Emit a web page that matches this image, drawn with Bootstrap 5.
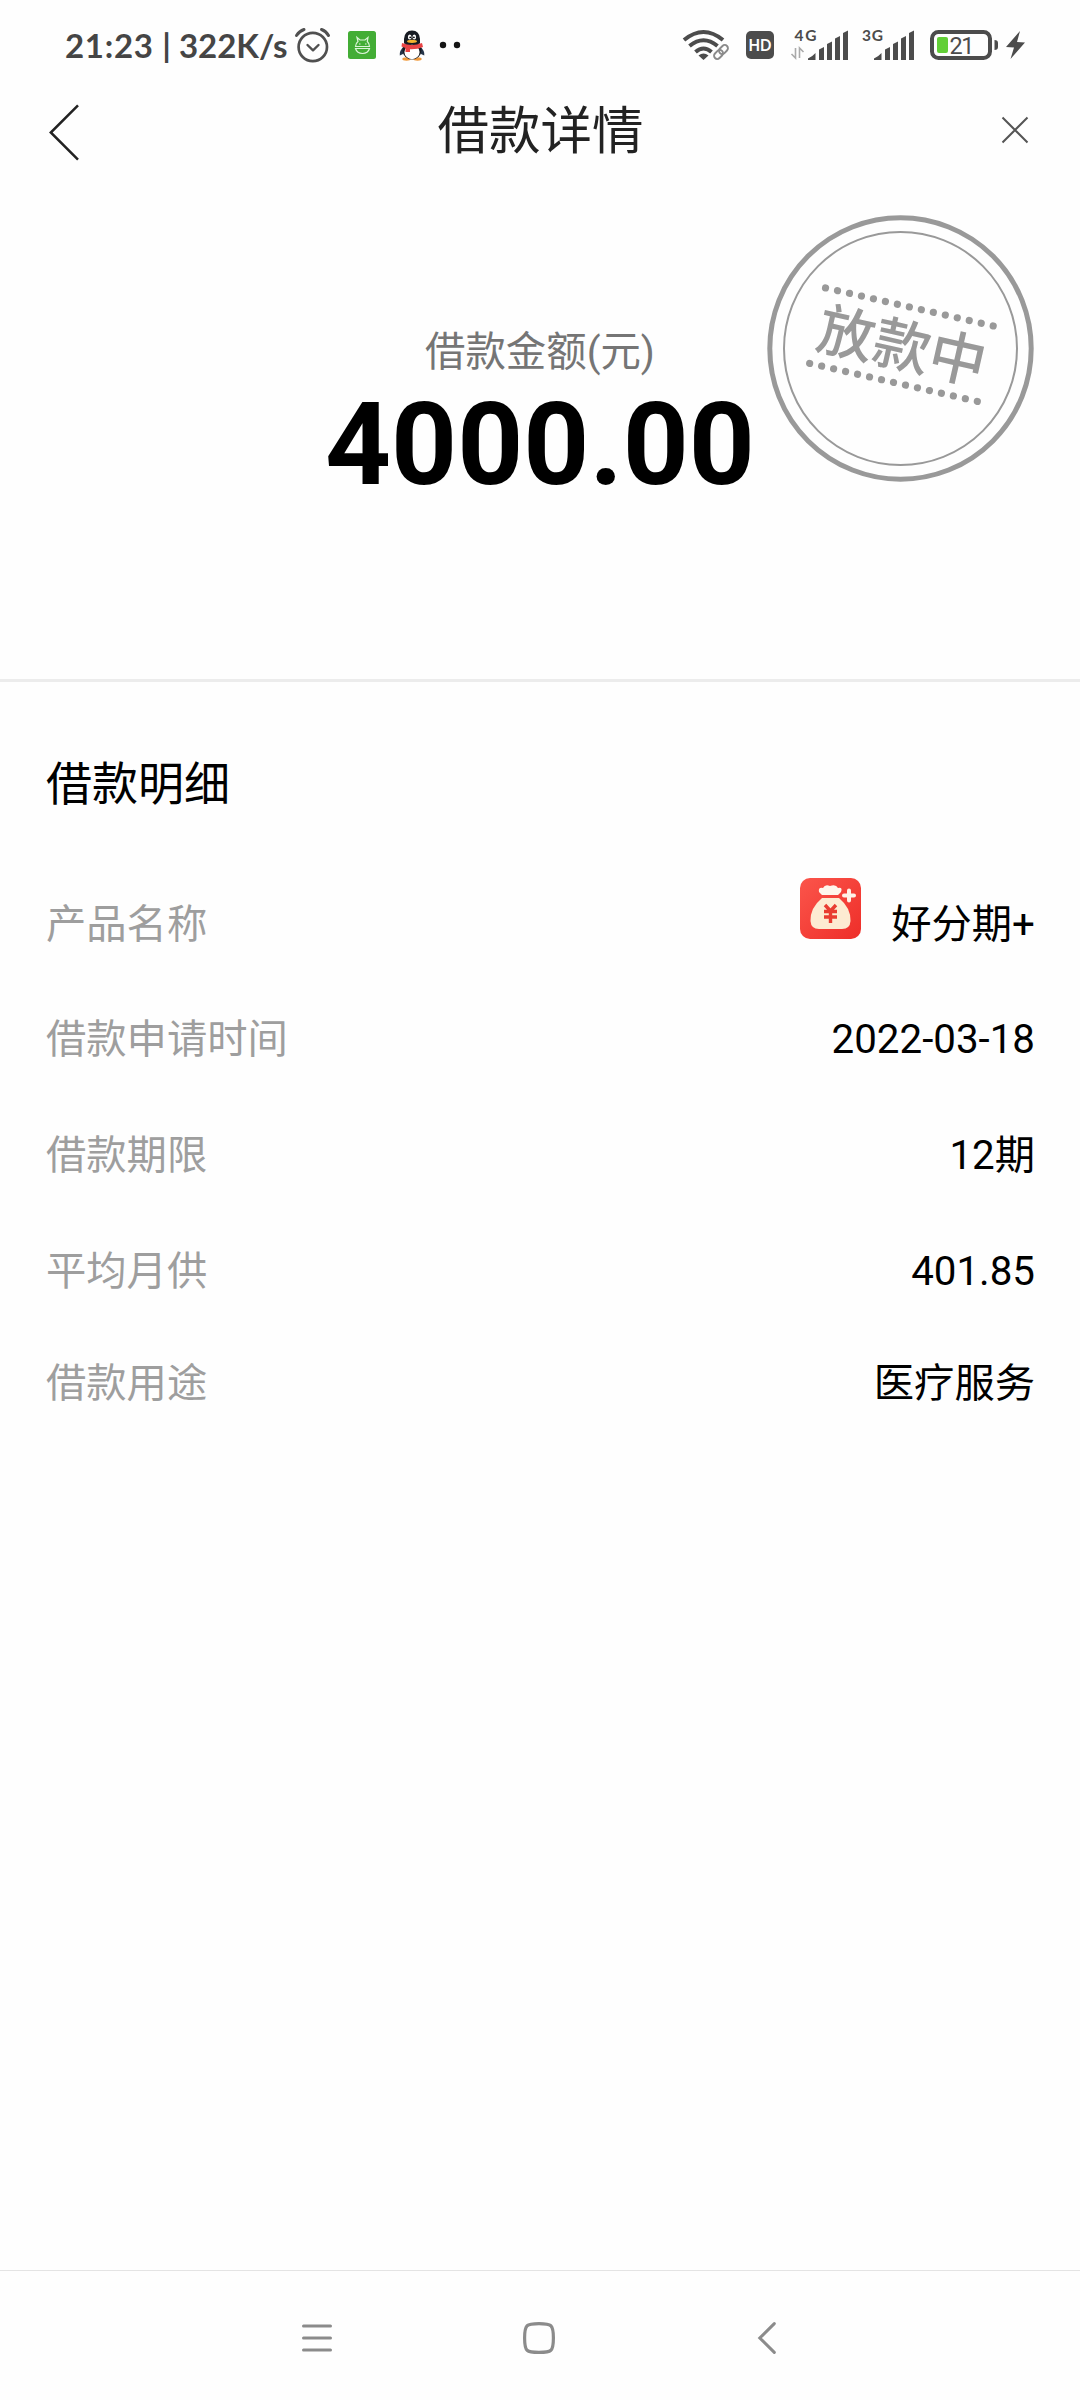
<!DOCTYPE html>
<html lang="zh-CN">
<head>
<meta charset="utf-8">
<meta name="viewport" content="width=device-width, initial-scale=1">
<title>借款详情</title>
<link href="https://cdn.jsdelivr.net/npm/bootstrap@5.3.0/dist/css/bootstrap.min.css" rel="stylesheet">
<style>
  body { font-family: Roboto, "Noto Sans CJK SC", sans-serif; background: #fefefe; color: #000; }
  svg { display: block; flex: none; overflow: visible; }
  .screen { width: 1080px; height: 2400px; }
  .status { height: 90px; padding-left: 65px; color: #454545; }
  .clock { font: 700 33px/40px Lato, sans-serif; width: 230px; white-space: pre; }
  .clock span { letter-spacing: .7px; }
  .ic-robot { margin-left: 18px; }
  .ic-penguin { margin-left: 23px; }
  .ic-dots { margin-left: 14px; }
  .ic-wifi { margin-left: 222px; }
  .ic-hd, .ic-sim1 { margin-left: 17px; }
  .ic-sim2 { margin-left: 14px; }
  .ic-battery { margin-left: 16px; }
  .ic-bolt { margin-left: 8px; }
  .titlebar { height: 80px; padding: 3px 52px 0 49px; color: #222; }
  .titlebar h1 { font-size: 51.5px; line-height: 77px; font-weight: 400; }
  .titlebar .ic-close { margin-bottom: 3px; }
  .hero { height: 512px; padding-top: 155px; border-bottom: 3px solid #ececec; }
  .caption { font-size: 40.4px; line-height: 56px; color: #757575; }
  .amount { font-size: 115.200px; line-height: 128px; font-weight: 700; }
  .stamp { top: 45px; right: 46px; }
  .details { padding: 72px 45px 0 46px; }
  .details h2 { font-size: 46px; line-height: 60px; font-weight: 400; margin: 0 0 53px; }
  .line { height: 115.6px; font-size: 40.3px; line-height: 60px; }
  .line:last-child { margin-top: -3.4px; }
  .line dt { font-weight: 400; color: #9e9e9e; }
  .line dd { margin: 0; }
  .logo { margin: -32px 30px 0 0; }
  .sysnav { height: 130px; border-top: 1px solid #e4e4e4; padding: 51px 304px 0 302px; }
  .sysnav .home { margin-right: 12px; }
</style>
<script src="https://cdn.jsdelivr.net/npm/bootstrap@5.3.0/dist/js/bootstrap.bundle.min.js"></script>
</head>
<body>
<div class="screen d-flex flex-column">
  <header>
    <div class="status d-flex align-items-center">
      <span class="clock"><span>21:23 </span>| 322K/s</span>
      <!-- alarm -->
      <svg width="35" height="35" viewBox="0 0 35 35" fill="none" stroke="#505050" stroke-width="2.7" stroke-linecap="round" stroke-linejoin="round"><circle cx="17.8" cy="19" r="14.2"/><path d="M12.5 17l5.5 5.3 5.5-5.3" stroke-width="2.4"/><path d="M1.500 7.500Q4.500 3 9 1.500M26.500 1.500Q31 3 33.500 7.500" stroke-width="3"/></svg>
      <!-- green robot -->
      <svg class="ic-robot" width="28" height="28" viewBox="0 0 28 28"><rect width="28" height="28" rx="2.500" fill="#43ad35"/><g fill="none" stroke="#dcf4d8" stroke-width="1.200"><path d="M9 6.500l1 4Q7.500 12.500 7.500 15.500H21.500Q21.500 12.500 19.300 10.500l.7-4-3 2.500h-5zM7.500 17.500Q9 22.500 14.500 22.500 20 22.500 21.500 17.500zM11 13h1.500M17 13h1.500"/></g></svg>
      <!-- penguin -->
      <svg class="ic-penguin" width="26" height="31" viewBox="0 0 26 31"><path d="M5 16Q0 21 .8 25.500l3.200-1.500M21 16q5 5 4.300 9.500L22 24" fill="#253449"/><ellipse cx="7.500" cy="29" rx="4.200" ry="1.700" fill="#f09a3c"/><ellipse cx="18.500" cy="29" rx="4.200" ry="1.700" fill="#f09a3c"/><ellipse cx="13" cy="20" rx="9.500" ry="9.500" fill="#171b22"/><ellipse cx="13" cy="22" rx="7.600" ry="7.200" fill="#fff"/><path d="M5 13.500V9Q5.500.5 13 .5T21 9v4.500z" fill="#171b22"/><ellipse cx="10.700" cy="7" rx="1.800" ry="2.500" fill="#fff"/><ellipse cx="15.300" cy="7" rx="1.800" ry="2.500" fill="#fff"/><circle cx="11.200" cy="7.300" r=".9"/><circle cx="14.900" cy="7.300" r=".9"/><ellipse cx="13" cy="11.300" rx="5" ry="1.600" fill="#f5b32f"/><path d="M3 13q10 4 20 0l1 4q-6 2.500-13 2.200V22H6.500v-4L2.500 16.500z" fill="#e84445"/></svg>
      <svg class="ic-dots" width="22" height="8" viewBox="0 0 22 8"><circle cx="4" cy="4" r="3.200" fill="#151515"/><circle cx="18" cy="4" r="3.200" fill="#151515"/></svg>
      <!-- wifi with link -->
      <svg class="ic-wifi" width="46" height="30" viewBox="0 0 46 30" fill="none" stroke="#4c4c4c" stroke-width="4"><path d="M1 10Q20.500-6 40 10M6.500 16Q20.500 4.500 34.500 16M12.500 22Q20.500 15 28.500 22"/><path d="M15.500 25.500Q20.500 21.500 25.500 25.500L20.500 30z" fill="#4c4c4c" stroke="none"/><g stroke="#8a8a8a" stroke-width="1.900" transform="translate(38 22) rotate(-45)"><rect x="-8.500" y="-3.200" width="10" height="6.400" rx="3.200"/><rect x="-1.500" y="-3.200" width="10" height="6.400" rx="3.200"/></g></svg>
      <svg class="ic-hd" width="28" height="28" viewBox="0 0 28 28"><rect width="28" height="28" rx="5" fill="#4c4c4c"/><text x="14" y="20.300" text-anchor="middle" textLength="23" lengthAdjust="spacingAndGlyphs" font-family="Lato" font-weight="700" font-size="17" fill="#fff">HD</text></svg>
      <!-- signal meters -->
      <svg class="ic-sim1" width="57" height="31" viewBox="0 0 57 31" fill="#4c4c4c"><text x="3.500" y="11" textLength="22" font-family="Lato" font-weight="700" font-size="15.500">4G</text><path d="M4.500 18v10L.5 24M8.500 28V18l4 4" fill="none" stroke="#aaa" stroke-width="1.600"/><path d="M17 30V28.500Q22 26 24.500 23V30zM28 19.500l5-2.500V30h-5zM36 14l5-2.500V30h-5zM44 8.500l5-2.500V30h-5zM52 3l5-2.500V30h-5z"/></svg>
      <svg class="ic-sim2" width="52" height="31" viewBox="0 0 52 31" fill="#4c4c4c"><text x="0" y="11" textLength="21" font-family="Lato" font-weight="700" font-size="15.500">3G</text><path d="M12 30V28.500Q17 26 19.500 23V30zM23 19.500l5-2.500V30h-5zM31 14l5-2.500V30h-5zM39 8.500l5-2.500V30h-5zM47 3l5-2.500V30h-5z"/></svg>
      <!-- battery -->
      <svg class="ic-battery" width="68" height="30" viewBox="0 0 68 30"><rect x="2" y="2" width="58" height="26" rx="6.500" fill="none" stroke="#4c4c4c" stroke-width="4"/><rect x="7" y="7" width="11" height="16" rx="2" fill="#62cf37"/><path d="M64.500 10q3.500 0 3.500 3v4q0 3-3.500 3z" fill="#4c4c4c"/><text x="19.500" y="24" textLength="25" font-family="Roboto" font-size="23.500" fill="#4c4c4c">21</text></svg>
      <svg class="ic-bolt" width="19" height="28" viewBox="0 0 19 28"><path d="M14 0L0 16l8 .5L4.500 28 19 11.500l-8-.5z" fill="#4c4c4c"/></svg>
    </div>
    <div class="titlebar d-flex align-items-center justify-content-between">
      <svg width="30" height="56" viewBox="0 0 30 56" fill="none" stroke="#222" stroke-width="2.500"><path d="M29 1.300L1.800 28.500 29 55.700"/></svg>
      <h1 class="m-0">借款详情</h1>
      <svg class="ic-close" width="26" height="26" viewBox="0 0 26 26" stroke="#555" stroke-width="2"><path d="M.5.5l25 25M25.500.5l-25 25"/></svg>
    </div>
  </header>

  <section class="hero position-relative text-center">
    <div class="caption">借款金额(元)</div>
    <div class="amount">4000.00</div>
    <svg class="stamp position-absolute" width="267" height="267" viewBox="-133.500 -133.500 267 267" fill="none" stroke="#999">
      <circle r="130.700" stroke-width="5"/><circle r="116.500" stroke-width="2"/>
      <g transform="rotate(12.770)">
        <g stroke-width="7.200" stroke-linecap="round" stroke-dasharray="0 12.280"><path d="M-86.500-42.500H86"/><path d="M-85.300 34.600H87.200"/></g>
        <text x="1" y="18" text-anchor="middle" font-family="Noto Sans CJK SC" font-weight="500" font-size="57" fill="#999" stroke="none">放款中</text>
      </g>
    </svg>
  </section>

  <main class="details flex-grow-1">
    <h2>借款明细</h2>
    <dl class="m-0">
      <div class="line d-flex justify-content-between align-items-center"><dt>产品名称</dt><dd class="d-flex align-items-center">
        <svg class="logo" width="61" height="61" viewBox="0 0 61 61">
          <defs><linearGradient id="red" x1="0" y1="0" x2="1" y2="1"><stop stop-color="#fb554b"/><stop offset="1" stop-color="#ee2e29"/></linearGradient></defs>
          <rect width="61" height="61" rx="10" fill="url(#red)"/>
          <path d="M19 14Q18 9 23 10q2-4 7-2 6-2 8 2 5-1 3 4l-3 3H22z" fill="#fff6ec"/>
          <path d="M22 20H39Q51 30 50.500 43 50 51 42 51H19Q11 51 10.500 43 10 30 22 20z" fill="#fdebd2"/>
          <path d="M49 12.500v10M44 17.500h10" stroke="#fff1e8" stroke-width="4" stroke-linecap="round"/>
          <path d="M25 27l5.500 6L36 27M24 33.500h13M24 39h13M30.500 33v12" fill="none" stroke="#e93c31" stroke-width="3.400"/>
        </svg><span>好分期+</span></dd></div>
      <div class="line d-flex justify-content-between align-items-center"><dt>借款申请时间</dt><dd>2022-03-18</dd></div>
      <div class="line d-flex justify-content-between align-items-center"><dt>借款期限</dt><dd>12期</dd></div>
      <div class="line d-flex justify-content-between align-items-center"><dt>平均月供</dt><dd>401.85</dd></div>
      <div class="line d-flex justify-content-between align-items-center"><dt>借款用途</dt><dd>医疗服务</dd></div>
    </dl>
  </main>

  <nav class="sysnav d-flex justify-content-between align-items-start">
    <svg width="30" height="32" viewBox="0 0 30 32" stroke="#8b8b8b" stroke-width="3" stroke-linecap="round"><path d="M1.500 4h27M1.500 16h27M1.500 28h27"/></svg>
    <svg class="home" width="32" height="32" viewBox="0 0 32 32" fill="none" stroke="#8b8b8b" stroke-width="3.200"><path d="M16 1.600C28.500 1.600 30.400 2.500 30.400 16S28.500 30.400 16 30.400 1.600 29.500 1.600 16 3.500 1.600 16 1.600z"/></svg>
    <svg width="18" height="32" viewBox="0 0 18 32" fill="none" stroke="#8b8b8b" stroke-width="3" stroke-linecap="round"><path d="M16.300 1.600L1.800 16l14.500 14.400"/></svg>
  </nav>
</div>
</body>
</html>
